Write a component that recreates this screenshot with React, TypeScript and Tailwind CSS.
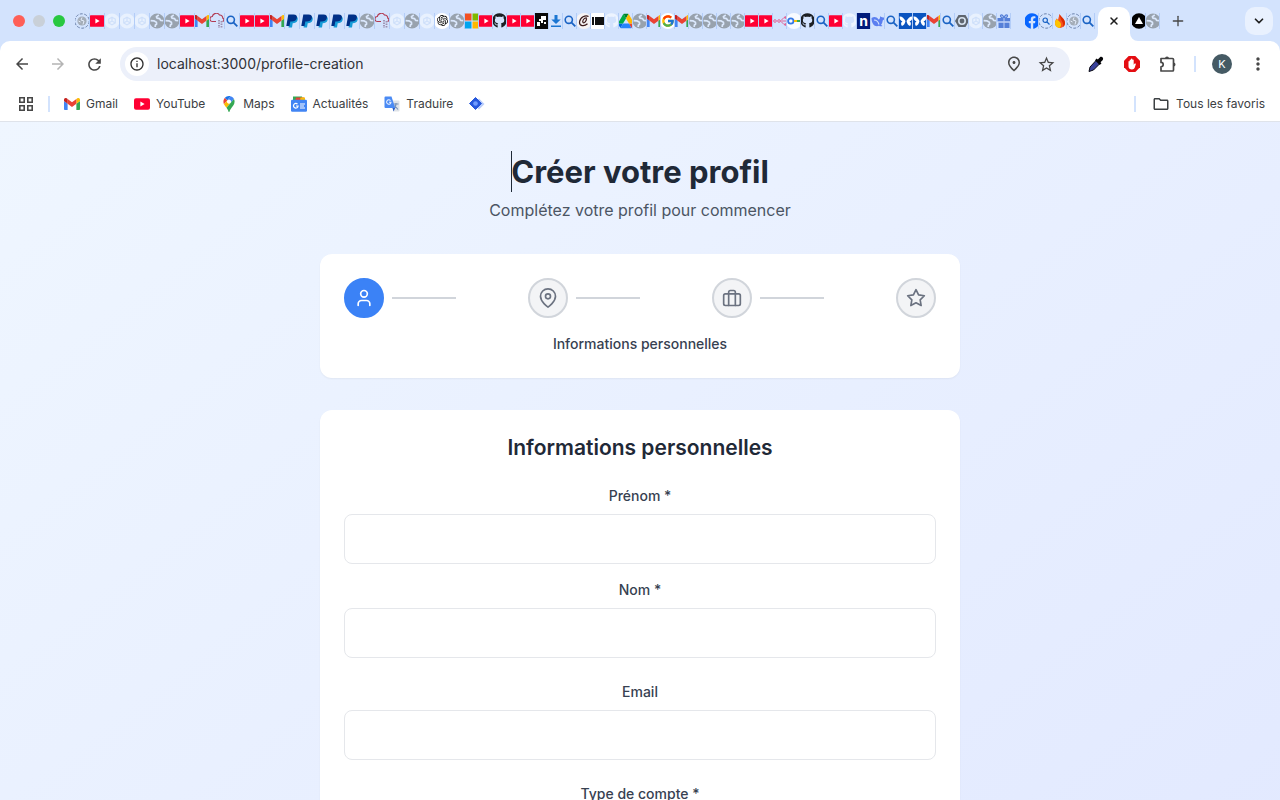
import type { ReactNode } from "react";
import { FaFacebook, FaGithub, FaPaypal } from "react-icons/fa";
import { FcGoogle } from "react-icons/fc";
import {
  MdArrowBack,
  MdArrowForward,
  MdInfoOutline,
  MdMoreVert,
  MdOutlineFolder,
  MdOutlinePlace,
  MdRefresh,
  MdStarBorder,
} from "react-icons/md";
import { SiOpenai } from "react-icons/si";
import { ChevronDown, Plus, X } from "lucide-react";

function Gmail() {
  return (
    <svg viewBox="52 42 88 66" className="h-3 w-4 shrink-0" aria-hidden="true">
      <path fill="#4285f4" d="M58 108h14V74L52 59v43c0 3.32 2.69 6 6 6" />
      <path fill="#34a853" d="M120 108h14c3.32 0 6-2.69 6-6V59l-20 15" />
      <path fill="#fbbc04" d="M120 48v26l20-15v-8c0-7.42-8.47-11.65-14.4-7.2" />
      <path fill="#ea4335" d="M72 74V48l24 18 24-18v26L96 92" />
      <path fill="#c5221f" d="M52 51v8l20 15V48l-5.6-4.2c-5.94-4.45-14.4-.22-14.4 7.2" />
    </svg>
  );
}

function YouTube() {
  return (
    <svg viewBox="0 0 16 16" className="size-4 shrink-0" aria-hidden="true">
      <rect y="2.3" width="16" height="11.4" rx="2" fill="#ff0033" />
      <path d="M6.4 5.6 10.6 8l-4.2 2.4z" fill="#fff" />
    </svg>
  );
}

function Globe() {
  return (
    <svg viewBox="0 0 16 16" className="size-4 shrink-0" aria-hidden="true">
      <circle cx="8" cy="8" r="7.4" fill="#98a2ad" />
      <path
        d="M9.8 2 7.400 3.600 8 5.200l2.600.4 1 1.800 2.600.2M1.600 7.600l3.200.2 2.600 1.400.2 1.800-1.200 1-.2 2"
        fill="none"
        stroke="#dbe8fc"
        strokeWidth="1.7"
        strokeLinejoin="round"
      />
    </svg>
  );
}

function Dashed({ children }: { children: ReactNode }) {
  return (
    <svg viewBox="0 0 16 16" className="size-4 shrink-0" aria-hidden="true">
      <circle cx="8" cy="8" r="7.2" fill="none" stroke="#6d83ad" strokeWidth="1" strokeDasharray="3 1.5" />
      {children}
    </svg>
  );
}

function Search() {
  return (
    <svg viewBox="0 0 16 16" className="size-4 shrink-0" aria-hidden="true">
      <circle cx="6.8" cy="6.8" r="3.6" fill="none" stroke="#1a63c4" strokeWidth="1.6" />
      <path d="m9.600 9.600 3.700 3.700" stroke="#1a63c4" strokeWidth="1.8" />
    </svg>
  );
}

function Cloud() {
  return (
    <svg viewBox="0 0 16 16" className="size-4 shrink-0" fill="none" aria-hidden="true">
      <path d="M7 8.500H3.500a2.500 2.500 0 0 1-.2-5A4 4 0 0 1 10.500 2a3 3 0 0 1 3.300 3.200c1.600.6 1.300 3-.3 3.200" stroke="#b23a52" strokeWidth="1.2" />
      <path d="M10 7v8M12.500 8v7" stroke="#9e8fb0" strokeWidth="1.8" strokeDasharray="1.5 1" />
    </svg>
  );
}

function Drive() {
  return (
    <svg viewBox="0 0 87.3 78" className="size-4 shrink-0" aria-hidden="true">
      <path fill="#0066da" d="m6.6 66.85 3.85 6.65c.8 1.4 1.95 2.5 3.3 3.3l13.75-23.8h-27.5c0 1.55.4 3.1 1.2 4.5z" />
      <path fill="#00ac47" d="m43.65 25-13.75-23.8c-1.35.8-2.5 1.9-3.3 3.3l-25.4 44a9.06 9.06 0 0 0-1.2 4.5h27.5z" />
      <path fill="#ea4335" d="m73.55 76.8c1.35-.8 2.5-1.9 3.3-3.3l1.6-2.75 7.65-13.25c.8-1.4 1.2-2.95 1.2-4.5h-27.5l5.85 11.5z" />
      <path fill="#00832d" d="m43.65 25 13.75-23.8c-1.35-.8-2.9-1.2-4.5-1.2h-18.5c-1.6 0-3.15.45-4.5 1.2z" />
      <path fill="#2684fc" d="m59.8 53h-32.3l-13.75 23.8c1.35.8 2.9 1.2 4.5 1.2h50.8c1.6 0 3.15-.45 4.5-1.2z" />
      <path fill="#ffba00" d="m73.4 26.5-12.7-22c-.8-1.4-1.95-2.5-3.3-3.3l-13.75 23.8 16.15 28h27.45c0-1.55-.4-3.1-1.2-4.5z" />
    </svg>
  );
}

function MapsPin() {
  return (
    <svg viewBox="0 0 92.3 132.3" className="size-4 shrink-0" aria-hidden="true">
      <path fill="#1a73e8" d="M60.2 2.2C55.8.8 51 0 46.1 0 32 0 19.3 6.4 10.8 16.5l21.8 18.3L60.2 2.2z" />
      <path fill="#ea4335" d="M10.8 16.5C4.1 24.5 0 34.9 0 46.1c0 8.7 1.7 15.7 4.6 22l28-33.3-21.8-18.3z" />
      <path fill="#4285f4" d="M46.2 28.5c9.8 0 17.7 7.9 17.7 17.7 0 4.3-1.6 8.3-4.2 11.4 0 0 13.9-16.6 27.5-32.7-5.6-10.8-15.3-19-27-22.7L32.6 34.8c3.3-3.8 8.1-6.3 13.6-6.3" />
      <path fill="#fbbc04" d="M46.2 63.8c-9.8 0-17.7-7.9-17.7-17.7 0-4.3 1.5-8.3 4.1-11.3l-28 33.3c4.8 10.6 12.8 19.2 21 29.9l34.1-40.5c-3.3 3.9-8.1 6.3-13.5 6.3" />
      <path fill="#34a853" d="M59.1 109.2c15.4-24.1 33.3-35 33.3-63 0-7.7-1.9-14.9-5.2-21.3L25.6 98c2.6 3.4 5.3 7.3 7.9 11.3 9.4 14.5 6.8 23.1 12.8 23.1s3.4-8.7 12.8-23.2" />
    </svg>
  );
}

function Glyph({ children }: { children: ReactNode }) {
  return (
    <svg viewBox="0 0 16 16" className="size-4 shrink-0" fill="none" aria-hidden="true">
      {children}
    </svg>
  );
}

const icons: Record<string, ReactNode> = {
  globe: <Globe />,
  dashedGlobe: (
    <Dashed>
      <circle cx="8" cy="8" r="4.6" fill="#a4adb8" />
      <path d="M8 4.500 7 7l3 1-1 3.500M4.500 8l2 1" fill="none" stroke="#e4ecfa" />
    </Dashed>
  ),
  dashedSearch: (
    <Dashed>
      <circle cx="7.2" cy="7.2" r="2.2" fill="none" stroke="#1a63c4" strokeWidth="1.2" />
      <path d="m9 9 2.500 2.500" stroke="#1a63c4" strokeWidth="1.3" />
    </Dashed>
  ),
  yt: <YouTube />,
  gmail: <Gmail />,
  cloud: <Cloud />,
  search: <Search />,
  pale: (
    <Glyph>
      <circle cx="8" cy="8" r="7.5" fill="#e8f1fe" />
      <path d="M8 4.200 11.300 6v4L8 11.800 4.700 10V6zM8 4.200V8l3.300 2M8 8l-3.300 2" stroke="#cfe0fa" strokeWidth="1.2" />
    </Glyph>
  ),
  paypal: (
    <Glyph>
      <path d="M5.500 3h5.400c2.700.3 3.400 2.300 2.600 4.300-.7 2.200-2.500 2.900-4.800 2.900L8 14.500H4.600z" fill="#179bd7" />
      <path d="M4.300 1.500h5.200c2.700 0 4 1.600 3.300 3.800-.7 2.400-2.500 3.200-4.900 3.200H6.300L5.500 13H2.300z" fill="#003087" />
    </Glyph>
  ),
  openai: (
    <span className="flex size-4 shrink-0 items-center justify-center rounded-full bg-white text-black">
      <SiOpenai size={11} />
    </span>
  ),
  microsoft: (
    <Glyph>
      <path d="M.5.500h7v7h-7z" fill="#f25022" />
      <path d="M8.500.500h7v7h-7z" fill="#7fba00" />
      <path d="M.5 8.500h7v7h-7z" fill="#00a4ef" />
      <path d="M8.500 8.500h7v7h-7z" fill="#ffb900" />
    </Glyph>
  ),
  github: <FaGithub size={15} className="shrink-0 text-[#1b1f24]" />,
  paleGithub: <FaGithub size={15} className="shrink-0 text-[#edf4ff]" />,
  pixel: (
    <Glyph>
      <path d="M0 0h16v16H0z" fill="#0a0a0a" />
      <path d="M7 3h5v4H9v3H7V8H5V6h2zM3 9h3v4H3zM10 9h2v2h-2z" fill="#fff" />
    </Glyph>
  ),
  download: (
    <Glyph>
      <path d="M6.500 2h3v4.500h3.200L8 11 3.300 6.500h3.200zM3 12.500h10v1.600H3z" fill="#1b76d2" />
    </Glyph>
  ),
  script: (
    <Glyph>
      <circle cx="8" cy="8" r="8" fill="#f7f4f4" />
      <path d="M12.500 3.500C9.500 1.500 4 4.500 3.500 9c-.3 4 4.500 5 8 1.800M10.800 5C8 4.500 6 8 7 9.500c1.300 1 3.500-1.500 3.600-4" stroke="#3c1c1c" strokeWidth="1.2" />
    </Glyph>
  ),
  video: (
    <Glyph>
      <rect width="16" height="16" rx="3" fill="#fff" />
      <path d="M2 4h2v8H2zM5 4h9v8H5z" fill="#111" />
    </Glyph>
  ),
  drive: <Drive />,
  google: (
    <span className="flex size-4 shrink-0 items-center justify-center rounded-full bg-white">
      <FcGoogle size={14} />
    </span>
  ),
  network: (
    <Glyph>
      <g stroke="#e0679a">
        <circle cx="3" cy="8" r="1.3" />
        <circle cx="7" cy="8" r="1.3" />
        <path d="M8.500 8 12 4.500h2M8.500 8 12 11.500h2M10 8h4" />
        <circle cx="13.500" cy="4.500" r="1" />
        <circle cx="13.500" cy="11.500" r="1" />
      </g>
    </Glyph>
  ),
  key: (
    <Glyph>
      <circle cx="8" cy="8" r="8" fill="#f8fbff" />
      <circle cx="4.800" cy="8" r="2.700" stroke="#3478e5" strokeWidth="1.8" />
      <path d="M8 8h3" stroke="#fbbc04" strokeWidth="2" />
      <path d="M11 8h4v3" stroke="#34a853" strokeWidth="2" />
    </Glyph>
  ),
  npm: (
    <span className="flex h-4 w-full items-center justify-center bg-[#001b7a] text-sm leading-4 font-bold text-white">
      n
    </span>
  ),
  whale: (
    <Glyph>
      <path d="M1.500 5c2.500-1.500 5-1.500 7 1.500 1.500-.5 1.700-2 1.500-3.500 1.300 1.500 2.700 1.700 5 1.200-.5 2-1.300 2.800-2.300 3.300-.2 2-.7 3.200-1.700 4.200l1.500 1.300c-1.500.5-2.500.4-3.500-.2C5 14.500 1.500 11 1.500 5z" fill="#5b7ff0" />
      <path d="M4 7c2.500 0 4.300 2 5 4.500" stroke="#d3e3fd" strokeWidth="1.1" />
    </Glyph>
  ),
  butterfly: (
    <Glyph>
      <path d="M0 0h16v16H0z" fill="#0a54c0" />
      <path d="M7.500 8C6 5 3.500 3 1.500 3.500c0 2.500 1 4.500 3 4.800C3 9 2.500 11.500 4 13c2-.5 3-2.500 3.500-5zM8.500 8C10 5 12.500 3 14.500 3.500c0 2.500-1 4.500-3 4.800 1.500.7 2 3.200.5 4.700-2-.5-3-2.500-3.500-5z" fill="#fff" />
    </Glyph>
  ),
  gear: (
    <Glyph>
      <path d="M4.500 2h7L15 8l-3.500 6h-7L1 8z" fill="#5f6670" />
      <circle cx="8" cy="8" r="3.2" fill="#5f6670" stroke="#d7e2ef" strokeWidth="1.6" />
    </Glyph>
  ),
  gift: (
    <Glyph>
      <path d="M1.500 5h13v3.500h-13zM2.500 9.500h11V15h-11z" fill="#5680d8" />
      <path d="M8 5C4 5 4 1.800 5.500 1.800S8 5 8 5s1-3.200 2.500-3.200S12 5 8 5z" stroke="#5680d8" strokeWidth="1.3" />
      <path d="M8 5v10M2 9h12" stroke="#b9cdf6" />
    </Glyph>
  ),
  facebook: <FaFacebook size={16} className="shrink-0 text-[#0866ff]" />,
  flame: (
    <Glyph>
      <path d="M7.500 1c1 2.500 5.500 5 5.500 9a5 5 0 0 1-10 0c0-2 1-3.500 1.700-4.500L6 7z" fill="#f4511e" />
      <path d="M4.500 6C6.500 8 9.500 9 9 12.500 8.500 14.500 7 15 7 15a5 5 0 0 1-4-5c0-1.500.8-3 1.500-4z" fill="#ffc400" />
      <path d="M7.500 1c1 2.500 5.500 5 5.500 9 0 1.500-.8 3-1.800 4C12 9 8 7 7.500 1z" fill="#dd2c00" />
    </Glyph>
  ),
  triangle: (
    <Glyph>
      <circle cx="8" cy="8" r="7.8" fill="#000" />
      <path d="m8 4 4 7H4z" fill="#fff" />
    </Glyph>
  ),
};

const wideTabs =
  "dashedGlobe yt pale pale pale globe globe yt gmail cloud search yt yt gmail paypal paypal paypal paypal paypal globe cloud pale globe pale openai globe".split(" ");
const narrowTabs =
  "microsoft yt github yt yt pixel download search script video paleGithub drive globe gmail google gmail globe globe globe globe yt yt network key github search yt paleGithub npm whale search butterfly butterfly gmail search gear pale globe gift".split(" ");
const groupTabs = ["facebook", "dashedSearch", "flame", "dashedGlobe", "search"];
const lastTabs = ["triangle", "globe"];

function TabRun({ names, wide = false }: { names: string[]; wide?: boolean }) {
  return (
    <div className="flex shrink-0">
      {names.map((name, i) => (
        <button
          key={i}
          type="button"
          aria-label={name}
          className={`flex h-4 items-center justify-center overflow-hidden border-r border-[#b3cdf8] ${wide ? "w-[15px]" : "w-3.5"}`}
        >
          {icons[name]}
        </button>
      ))}
    </div>
  );
}

function TabStrip() {
  return (
    <div className="flex h-[41px] items-center overflow-hidden bg-[#d3e3fd] pr-[7px] pl-[13px]">
      <div className="mr-2.5 flex shrink-0 gap-2">
        <button type="button" aria-label="Fermer" className="size-3 rounded-full bg-[#fe5f57]" />
        <button type="button" aria-label="Réduire" className="size-3 rounded-full bg-[#c9d0d8]" />
        <button type="button" aria-label="Agrandir" className="size-3 rounded-full bg-[#28c840]" />
      </div>
      <TabRun names={wideTabs} wide />
      <TabRun names={narrowTabs} />
      <div className="ml-3.5 flex shrink-0">
        <TabRun names={groupTabs} />
      </div>
      <div className="relative ml-[3px] flex h-[34px] w-8 shrink-0 items-center justify-center self-end rounded-t-[10px] bg-white pb-1.5">
        <svg viewBox="0 0 8 8" className="absolute bottom-0 -left-2 size-2" aria-hidden="true">
          <path d="M8 0v8H0a8 8 0 0 0 8-8" fill="#fff" />
        </svg>
        <button type="button" aria-label="Fermer l'onglet" className="text-[#1f1f1f]">
          <X size={12} strokeWidth={3} />
        </button>
        <svg viewBox="0 0 8 8" className="absolute -right-2 bottom-0 size-2" aria-hidden="true">
          <path d="M0 0v8h8a8 8 0 0 1-8-8" fill="#fff" />
        </svg>
      </div>
      <div className="ml-0.5 flex shrink-0">
        <TabRun names={lastTabs} />
      </div>
      <button type="button" aria-label="Nouvel onglet" className="ml-2.5 shrink-0 text-[#474747]">
        <Plus size={16} strokeWidth={2} />
      </button>
      <button
        type="button"
        aria-label="Rechercher dans les onglets"
        className="ml-auto flex size-7 shrink-0 items-center justify-center rounded-[10px] bg-[#e9f1fe] text-[#1f1f1f]"
      >
        <ChevronDown size={14} strokeWidth={3} />
      </button>
    </div>
  );
}

function ToolButton({ label, children }: { label: string; children: ReactNode }) {
  return (
    <button type="button" aria-label={label} className="flex h-8 w-9 shrink-0 items-center justify-center text-[#474747]">
      {children}
    </button>
  );
}

function Toolbar() {
  return (
    <div className="flex h-[46px] items-center rounded-t-[10px] bg-white px-1">
      <ToolButton label="Retour"><MdArrowBack size={18} /></ToolButton>
      <ToolButton label="Avancer"><MdArrowForward size={18} className="text-[#b4b4b4]" /></ToolButton>
      <ToolButton label="Actualiser"><MdRefresh size={19} /></ToolButton>
      <div className="mx-2 flex h-[34px] min-w-0 flex-1 items-center rounded-full bg-[#ecf0fa] pr-3.5 pl-[5px]">
        <span className="flex size-6 shrink-0 items-center justify-center rounded-full bg-white text-[#303030]">
          <MdInfoOutline size={16} />
        </span>
        <input
          type="text"
          aria-label="Adresse"
          defaultValue="localhost:3000/profile-creation"
          className="ml-2 min-w-0 flex-1 bg-transparent text-sm text-[#303237] outline-none"
        />
        <div className="flex gap-3.5 text-[#474747]">
          <button type="button" aria-label="Position"><MdOutlinePlace size={18} /></button>
          <button type="button" aria-label="Ajouter aux favoris"><MdStarBorder size={19} /></button>
        </div>
      </div>
      <ToolButton label="Pipette">
        <svg viewBox="0 0 16 16" className="size-4" aria-hidden="true">
          <path d="m8 4.500 3.500 3.500-6 6L1 15.500 2 11z" fill="#39419a" stroke="#0b0b14" strokeWidth="1" />
          <path d="M9.800 3.500 12 1.200c1.800-1.200 4 1 2.800 2.800l-2.300 2.200 1 1-1.700 1.700L7 4.200l1.700-1.700z" fill="#050508" />
        </svg>
      </ToolButton>
      <ToolButton label="Bloqueur">
        <svg viewBox="0 0 16 16" className="size-4" aria-hidden="true">
          <path d="M4.700 0h6.600L16 4.700v6.600L11.300 16H4.700L0 11.300V4.700z" fill="#e40d12" />
          <path d="M4.500 5.500c0-.8 1.200-.8 1.200 0V4c0-.8 1.300-.8 1.300 0V3c0-.8 1.400-.8 1.400 0v1c0-.8 1.300-.8 1.300 0v5c.5-1.500 1.800-1.700 2.200-1L10.800 11.500c-.5 1.300-1.500 2-2.800 2-2 0-3.500-1-3.500-3z" fill="#fff" />
        </svg>
      </ToolButton>
      <ToolButton label="Extensions">
        <svg viewBox="0 0 18 18" className="size-[18px]" fill="none" aria-hidden="true">
          <path d="M2 3.500h11.500a1 1 0 0 1 1 1V15a1 1 0 0 1-1 1H2v-4.200a2.200 2.200 0 0 0 0-4.400z" stroke="#474747" strokeWidth="1.700" strokeLinejoin="round" />
          <path d="M6 3.500a2 2 0 0 1 4 0zM14.500 7.500a2 2 0 0 1 0 4z" fill="#474747" />
        </svg>
      </ToolButton>
      <div className="mx-2 h-4 w-0.5 shrink-0 bg-[#d3e3fd]" />
      <ToolButton label="Profil">
        <span className="flex size-5 items-center justify-center rounded-full bg-[#455a64] text-[11px] text-white">K</span>
      </ToolButton>
      <ToolButton label="Menu"><MdMoreVert size={20} /></ToolButton>
    </div>
  );
}

function Bookmark({ icon, children }: { icon: ReactNode; children?: ReactNode }) {
  return (
    <a href="#" className="flex shrink-0 items-center gap-1.5">
      {icon}
      {children}
    </a>
  );
}

function BookmarksBar() {
  return (
    <div className="flex h-[35px] items-center border-b border-[#dfe3ea] bg-white pr-[15px] pl-[18px] text-xs text-[#3c4043]">
      <button type="button" aria-label="Applications" className="shrink-0">
        <svg viewBox="0 0 16 16" className="size-4" fill="none" stroke="#474747" strokeWidth="1.6" aria-hidden="true">
          <path d="M1.800 1.800h4.400v4.400H1.800zM9.800 1.800h4.400v4.400H9.800zM1.800 9.800h4.400v4.400H1.800zM9.800 9.800h4.400v4.400H9.800z" />
        </svg>
      </button>
      <div className="mr-3.5 ml-3.5 h-4 w-0.5 bg-[#d3e3fd]" />
      <nav className="flex gap-4">
        <Bookmark icon={<Gmail />}>Gmail</Bookmark>
        <Bookmark icon={<YouTube />}>YouTube</Bookmark>
        <Bookmark icon={<MapsPin />}>Maps</Bookmark>
        <Bookmark
          icon={
            <Glyph>
              <path d="M2 .5h9l1 5H2z" fill="#34a853" />
              <path d="M5 1.500h8v5H4z" fill="#ea4335" />
              <path d="M9.500 1.500H14v4H9z" fill="#fbbc04" />
              <rect y="3.800" width="16" height="12" rx="1.200" fill="#4285f4" />
              <path d="M6.500 8.200a2.300 2.300 0 1 0 .6 1.800H5M9 8h5M9 10h4M9 12h5" stroke="#fff" strokeWidth="1.2" />
            </Glyph>
          }
        >
          Actualités
        </Bookmark>
        <Bookmark
          icon={
            <Glyph>
              <path d="M7 4.500h7.500a1 1 0 0 1 1 1v9a1 1 0 0 1-1 1H9.500z" fill="#dfe3e8" />
              <path d="M9.500 8h5M12 7v1c0 2-1.200 3.500-3 4.500M10.500 9.500l3.500 4" stroke="#7790b5" strokeWidth="1.1" />
              <path d="M1.500.5h6l3.700 11.600H1.500a1 1 0 0 1-1-1V1.500a1 1 0 0 1 1-1z" fill="#4a8af4" />
              <path d="m8.500 12.100 2.700 0-1.700 3.400z" fill="#2b5cc0" />
              <path d="M6.500 4.600A2.200 2.200 0 1 0 7 6.300H5" stroke="#e8f0ff" strokeWidth="1.1" />
            </Glyph>
          }
        >
          Traduire
        </Bookmark>
        <Bookmark
          icon={
            <Glyph>
              <path d="m10 2.500 5.500 5.500L10 13.500 4.500 8z" fill="#b9cdfb" />
              <path d="M6.500 1.500 12.500 7.500 6.500 13.500.5 7.500z" fill="#2557dc" stroke="#2557dc" strokeLinejoin="round" />
              <circle cx="6.500" cy="7.500" r="2.300" fill="#6f9bff" />
            </Glyph>
          }
        />
      </nav>
      <div className="mr-4 ml-auto h-4 w-0.5 shrink-0 bg-[#d3e3fd]" />
      <Bookmark icon={<MdOutlineFolder size={18} />}>Tous les favoris</Bookmark>
    </div>
  );
}

const steps: { label: string; icon: ReactNode }[] = [
  {
    label: "Informations personnelles",
    icon: (
      <>
        <path d="M19 21v-2a4 4 0 0 0-4-4H9a4 4 0 0 0-4 4v2" />
        <circle cx="12" cy="7" r="4" />
      </>
    ),
  },
  {
    label: "Localisation",
    icon: (
      <>
        <path d="M21 10c0 7-9 13-9 13s-9-6-9-13a9 9 0 0 1 18 0z" />
        <circle cx="12" cy="10" r="3" />
      </>
    ),
  },
  {
    label: "Profession",
    icon: (
      <>
        <rect x="2" y="7" width="20" height="14" rx="2" />
        <path d="M16 21V5a2 2 0 0 0-2-2h-4a2 2 0 0 0-2 2v16" />
      </>
    ),
  },
  {
    label: "Finalisation",
    icon: <path d="m12 2 3.090 6.260L22 9.270l-5 4.870 1.180 6.880L12 17.770l-6.180 3.250L7 14.140 2 9.270l6.910-1.010z" />,
  },
];

function Stepper() {
  return (
    <section className="rounded-xl bg-white p-6 shadow-[0_1px_2px_rgba(0,0,0,0.05)]">
      <ol className="flex items-center justify-between">
        {steps.map((step, i) => (
          <li key={step.label} className="flex items-center gap-2">
            <span
              className={`flex size-10 items-center justify-center rounded-full border-2 ${
                i === 0 ? "border-[#3b82f6] bg-[#3b82f6] text-white" : "border-[#d1d5db] bg-[#f3f4f6] text-[#6b7280]"
              }`}
            >
              <svg
                viewBox="0 0 24 24"
                className="size-5"
                fill="none"
                stroke="currentColor"
                strokeWidth="2"
                strokeLinecap="round"
                strokeLinejoin="round"
                aria-hidden="true"
              >
                {step.icon}
              </svg>
            </span>
            {i < steps.length - 1 && <span className="h-0.5 w-4 bg-[#d1d5db] sm:w-16" />}
          </li>
        ))}
      </ol>
      <p className="mt-4 text-center text-sm font-medium text-[#374151]">Informations personnelles</p>
    </section>
  );
}

const fieldClass = "block h-[50px] w-full rounded-lg border border-[#e5e7eb] bg-white px-4 py-3 outline-none";
const labelClass = "mb-2 block text-center text-sm font-medium text-[#374151]";

function Field({ id, label, type = "text" }: { id: string; label: string; type?: string }) {
  return (
    <div>
      <label htmlFor={id} className={labelClass}>{label}</label>
      <input id={id} type={type} className={fieldClass} />
    </div>
  );
}

function ProfileForm() {
  return (
    <form className="mt-8 rounded-xl bg-white p-6 shadow-[0_1px_2px_rgba(0,0,0,0.05)]">
      <h2 className="mb-6 text-center text-[21px] leading-7 font-semibold text-[#1f2937]">Informations personnelles</h2>
      <div className="flex flex-col gap-6">
        <div className="flex flex-col gap-4">
          <Field id="prenom" label="Prénom *" />
          <Field id="nom" label="Nom *" />
        </div>
        <Field id="email" label="Email" type="email" />
        <div>
          <label htmlFor="type" className={labelClass}>Type de compte *</label>
          <select id="type" className={fieldClass} />
        </div>
      </div>
    </form>
  );
}

export default function App() {
  return (
    <div className="flex h-screen flex-col overflow-hidden bg-[#d3e3fd] font-['Inter',sans-serif]">
      <header className="shrink-0">
        <TabStrip />
        <Toolbar />
        <BookmarksBar />
      </header>
      <main className="min-h-0 flex-1 overflow-hidden">
        <div className="bg-linear-to-br from-[#eff6ff] to-[#e0e7ff] px-4 pt-8 pb-64">
          <div className="mx-auto max-w-[640px]">
            <div className="mb-8 text-center">
              <h1 className="mb-2 text-[31px] leading-9 font-bold text-[#1f2937]">
                <span className="relative">
                  <span className="absolute -inset-y-0.5 left-0 w-px bg-[#1f2937]" />
                  Créer votre profil
                </span>
              </h1>
              <p className="text-base text-[#4b5563]">Complétez votre profil pour commencer</p>
            </div>
            <Stepper />
            <ProfileForm />
          </div>
        </div>
      </main>
    </div>
  );
}
